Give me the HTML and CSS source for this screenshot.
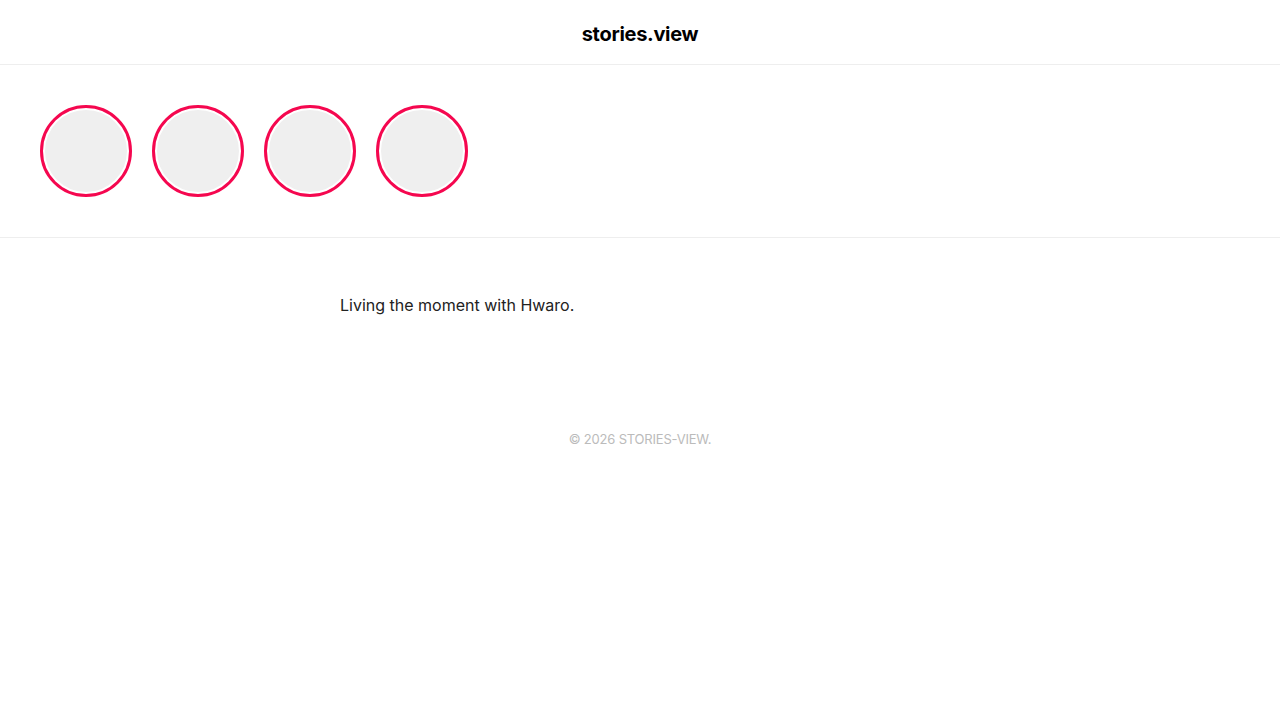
FILE: index.html
```html
<!DOCTYPE html>
<html>
<head>
<meta charset="utf-8">
<link rel="stylesheet" href="styles.css">
</head>
<body>
<header class="top">
  <h1 class="brand">stories.view</h1>
</header>
<section class="stories">
  <div class="story"><div class="avatar"></div></div>
  <div class="story"><div class="avatar"></div></div>
  <div class="story"><div class="avatar"></div></div>
  <div class="story"><div class="avatar"></div></div>
</section>
<main class="content">
  <p class="caption">Living the moment with Hwaro.</p>
</main>
<footer class="foot">© 2026 STORIES-VIEW.</footer>
</body>
</html>
```
FILE: styles.css
```css
* { box-sizing: border-box; }
html, body { margin: 0; padding: 0; background: #fff; }
body { font-family: Inter, "Open Sans", sans-serif; color: #111; }
.top {
  height: 65px;
  padding-top: 3px;
  border-bottom: 1px solid #eeeeee;
  display: flex;
  align-items: center;
  justify-content: center;
}
.brand {
  margin: 0;
  font-size: 20px;
  font-weight: 700;
  letter-spacing: -0.3px;
  color: #000;
}
.stories {
  display: flex;
  gap: 20px;
  padding: 40px;
  border-bottom: 1px solid #eeeeee;
}
.story {
  width: 92px;
  height: 92px;
  border-radius: 50%;
  border: 3px solid #f5074f;
  padding: 2px;
}
.avatar {
  width: 100%;
  height: 100%;
  border-radius: 50%;
  background: #efefef;
}
.content {
  width: 600px;
  margin: 0 auto;
  padding: 55px 0 0;
}
.caption {
  margin: 0;
  font-size: 16px;
  line-height: 24px;
  color: #222;
  letter-spacing: 0;
}
.foot {
  text-align: center;
  margin-top: 114px;
  font-size: 13px;
  color: #bbbbbb;
  letter-spacing: -0.2px;
}
```
